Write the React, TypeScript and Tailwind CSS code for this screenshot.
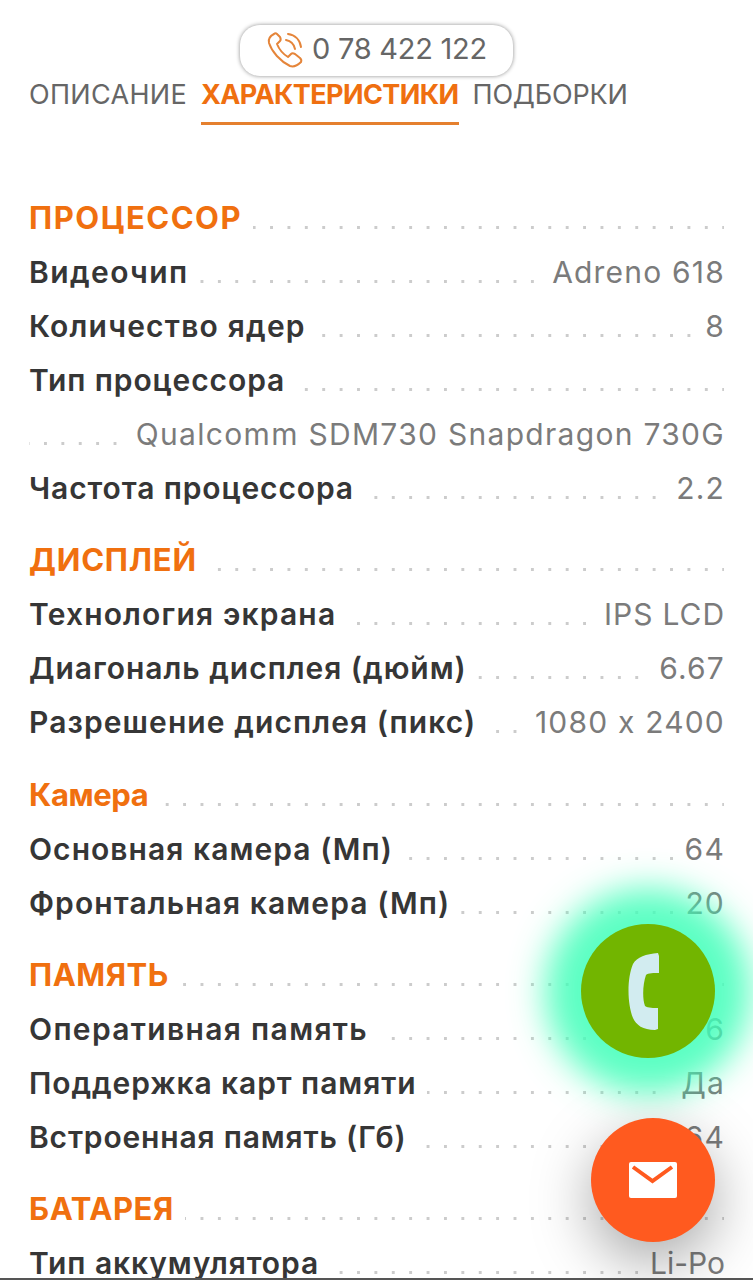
import React from "react";

const dots = "bg-[linear-gradient(90deg,#cccccc_3px,transparent_3px)] bg-[length:17.4px_3px] bg-repeat-x bg-[position:15px_35px]";

function Row({ label, value, track = "tracking-[1.05px]", valueTrack = "tracking-[1.2px]" }: { label: string; value?: string; track?: string; valueTrack?: string }) {
  return (
    <div className={`flex h-[54px] items-center justify-between ${dots}`}>
      {label && <span className={`bg-white pr-[11px] text-[30px] font-semibold leading-[52px] text-[#363636] ${track}`}>{label}</span>}
      {value && <span className={`-mr-[1px] ml-auto bg-white pl-3 text-[30px] leading-[52px] text-[#7b7b7b] ${valueTrack}`}>{value}</span>}
    </div>
  );
}

function Head({ label, track }: { label: string; track: string }) {
  return (
    <div className={`flex h-[54px] items-center ${dots}`}>
      <span className={`bg-white pr-[11px] text-[31px] font-bold leading-[52px] text-[#f0700f] ${track}`}>{label}</span>
    </div>
  );
}

export default function App() {
  return (
    <div className="relative h-[1280px] w-[753px] overflow-hidden border-b-2 border-[#555555] bg-white font-['Inter',sans-serif]">
      <div className="flex justify-center pt-[25px]">
        <div className="flex h-[51px] w-[273px] items-center justify-center gap-[6px] rounded-[20px] bg-white pb-[4px] shadow-[0_0_4px_rgba(0,0,0,0.45)]">
          <svg width="40" height="40" viewBox="0 0 40 40" fill="none" stroke="#e5853a" strokeWidth="2" strokeLinecap="round" strokeLinejoin="round">
            <path d="M8 5 C4 7 2 10 3 14 C6 23 14 32 24 37 C27 38 31 37 35 33 C36 31 35 30 34 29 L29 25 C27 24 26 24 25 25 L22 28 C17 25 13 20 11 15 L14 12 C15 11 15 10 14 8 L11 5 C10 4 9 4 8 5 Z" />
            <path d="M20 11 C25 12 28 15 29 20" />
            <path d="M22 5 C29 6 34 11 35 18" />
          </svg>
          <span className="text-[29px] leading-none tracking-[-0.25px] text-[#666666]">0 78 422 122</span>
        </div>
      </div>
      <div className="flex px-[29px]">
        <span className="pt-[1px] text-[27px] leading-[36px] tracking-[0.3px] text-[#666666]">ОПИСАНИЕ</span>
        <span className="ml-[14px] h-[49px] border-b-[3px] border-[#e5802e] pt-[1px] text-[27px] font-bold leading-[36px] tracking-[-0.6px] text-[#ef6f10]">ХАРАКТЕРИСТИКИ</span>
        <span className="ml-[14px] pt-[1px] text-[27px] leading-[36px] tracking-[-0.2px] text-[#666666]">ПОДБОРКИ</span>
      </div>
      <div className="px-[29px] pt-[66px]">
        <Head label="ПРОЦЕССОР" track="tracking-[1.5px]" />
        <Row label="Видеочип" value="Adreno 618" track="tracking-[1.4px]" />
        <Row label="Количество ядер" value="8" track="tracking-[1.2px]" />
        <Row label="Тип процессора" track="tracking-[0.9px]" />
        <Row label="" value="Qualcomm SDM730 Snapdragon 730G" valueTrack="tracking-[1.3px]" />
        <Row label="Частота процессора" value="2.2" track="tracking-[0.88px]" />
        <div className="h-[18px]" />
        <Head label="ДИСПЛЕЙ" track="tracking-[0.8px]" />
        <Row label="Технология экрана" value="IPS LCD" track="tracking-[1.17px]" valueTrack="tracking-[0.9px]" />
        <Row label="Диагональ дисплея (дюйм)" value="6.67" track="tracking-[0.97px]" />
        <Row label="Разрешение дисплея (пикс)" value="1080 x 2400" track="tracking-[1.09px]" />
        <div className="h-[19px]" />
        <Head label="Камера" track="tracking-[-0.4px]" />
        <Row label="Основная камера (Мп)" value="64" />
        <Row label="Фронтальная камера (Мп)" value="20" track="tracking-[1.1px]" />
        <div className="h-[18px]" />
        <Head label="ПАМЯТЬ" track="tracking-[0.5px]" />
        <Row label="Оперативная память" value="6" track="tracking-[1.33px]" />
        <Row label="Поддержка карт памяти" value="Да" track="tracking-[0.91px]" />
        <Row label="Встроенная память (Гб)" value="64" track="tracking-[0.82px]" />
        <div className="h-[18px]" />
        <Head label="БАТАРЕЯ" track="tracking-[0.6px]" />
        <Row label="Тип аккумулятора" value="Li-Po" track="tracking-[0.93px]" valueTrack="tracking-[0px]" />
      </div>
      <div className="absolute left-[581px] top-[924px] flex h-[134px] w-[134px] items-center justify-center rounded-full bg-[#72b500] shadow-[0_0_34px_36px_rgba(64,255,185,0.85)]">
        <svg width="31" height="77" viewBox="0 0 31 77" fill="#d2ecf0" className="-ml-[9px]">
          <path d="M30 0 L31 3 L31 20 C26 20 20 20 18 22 C15 30 14 45 17 53 C20 55 26 55 30 55 L30 76 L27 77 C15 77 8 72 5 65 C-1 50 -1 25 5 11 C9 4 18 1 30 0 Z" />
        </svg>
      </div>
      <div className="absolute left-[591px] top-[1118px] flex h-[124px] w-[124px] items-center justify-center rounded-full bg-[#ff5a1f] shadow-[0_20px_60px_rgba(0,0,0,0.35)]">
        <svg width="48" height="36" viewBox="0 0 48 36">
          <rect width="48" height="36" rx="2" fill="#ffffff" />
          <path d="M4 5 L23.5 19 L43 5" fill="none" stroke="#ff5a1f" strokeWidth="4" />
        </svg>
      </div>
    </div>
  );
}
